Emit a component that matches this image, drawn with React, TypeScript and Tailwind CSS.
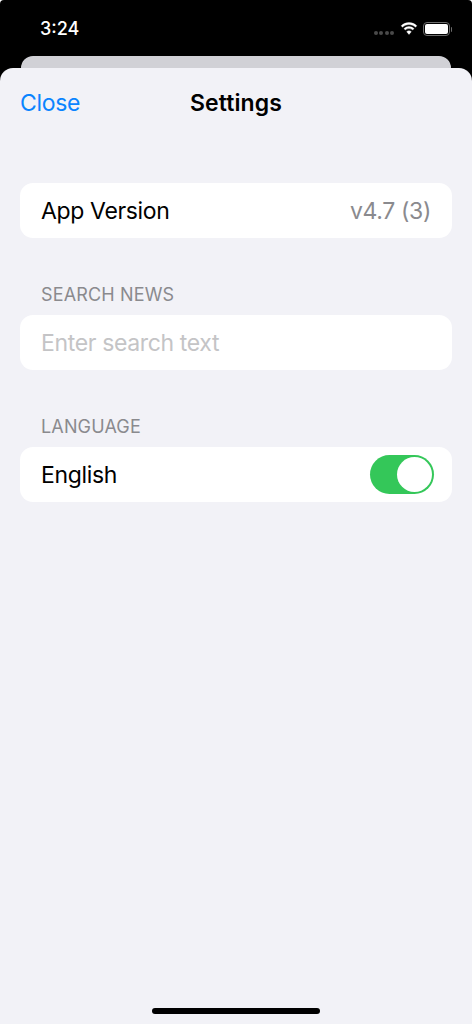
import { useState } from "react";

function StatusBar() {
  return (
    <div className="flex h-[56px] items-start justify-between pl-[40px] pr-[20px] pt-[20px]">
      <span className="text-[18px] font-medium leading-[18px] text-white">3:24</span>
      <div className="flex items-center gap-[5px] pt-[2px]">
        <div className="mb-[1px] mr-[1px] flex gap-[1.5px] self-end">
          {[0, 1, 2, 3].map((i) => (
            <span key={i} className="h-[4px] w-[4px] rounded-full bg-[#4a4a4a]" />
          ))}
        </div>
        <svg width="18" height="14" viewBox="0 0 18 14" fill="white" stroke="white" strokeWidth="0.4">
          <path d="M9 2.6c2.5 0 4.8 1 6.5 2.6l1.3-1.4C14.7 1.800 12 .6 9 .6S3.300 1.800 1.200 3.800l1.300 1.400C4.200 3.600 6.500 2.600 9 2.600z" />
          <path d="M9 6.600c1.400 0 2.700.5 3.700 1.400l1.300-1.400C12.700 5.400 10.900 4.600 9 4.600s-3.700.8-5 2l1.300 1.400c1-.9 2.300-1.400 3.700-1.400z" />
          <path d="M9 8.800c-.9 0-1.700.3-2.300.9L9 12.400l2.300-2.700c-.6-.6-1.400-.9-2.300-.9z" />
        </svg>
        <div className="flex items-center">
          <div className="flex h-[14px] w-[27px] items-center justify-center rounded-[4px] border border-[#6b6b6b]">
            <div className="h-[10px] w-[23px] rounded-[2px] bg-white" />
          </div>
          <div className="ml-[1px] h-[5px] w-[1px] rounded-r-sm bg-[#6b6b6b]" />
        </div>
      </div>
    </div>
  );
}

function Card({ children }: { children: React.ReactNode }) {
  return (
    <div className="mx-[20px] flex h-[55px] items-center justify-between rounded-[13px] bg-white px-[21px] text-[23px] tracking-[-0.35px] text-black">
      {children}
    </div>
  );
}

function SectionLabel({ text }: { text: string }) {
  return (
    <div className="mb-[9px] ml-[41px] text-[18px] leading-[22px] tracking-[0.15px] text-[#8a8a8e]">{text}</div>
  );
}

export default function App() {
  const [search, setSearch] = useState("");
  const [english, setEnglish] = useState(true);

  return (
    <div
      className="flex h-[1024px] w-[472px] flex-col overflow-hidden rounded-t-[4px] bg-black"
      style={{ fontFamily: "Inter, 'Liberation Sans', sans-serif" }}
    >
      <StatusBar />

      {/* card behind the sheet */}
      <div className="mx-[21px] h-[12px] shrink-0 rounded-t-[13px] bg-[#d1d1d6]" />

      <div className="relative flex flex-1 flex-col rounded-t-[13px] bg-[#f2f2f7]">
        <div className="flex h-[70px] items-center justify-between px-[20px]">
          <button className="text-[23px] leading-none tracking-[-0.3px] text-[#0a84ff]">Close</button>
          <h1 className="absolute left-0 right-0 text-center text-[23px] font-semibold leading-none tracking-[0.1px] text-black">
            Settings
          </h1>
        </div>

        <div className="mt-[45px]">
          <Card>
            <span className="pt-[2px]">App Version</span>
            <span className="pt-[2px] text-[#8a8a8e]">v4.7 (3)</span>
          </Card>
        </div>

        <div className="mt-[46px]">
          <SectionLabel text="SEARCH NEWS" />
          <Card>
            <input
              value={search}
              onChange={(e) => setSearch(e.target.value)}
              placeholder="Enter search text"
              className="w-full bg-transparent pt-[2px] outline-none placeholder:text-[#c4c4c6]"
            />
          </Card>
        </div>

        <div className="mt-[46px]">
          <SectionLabel text="LANGUAGE" />
          <Card>
            <span className="pt-[2px]">English</span>
            <button
              onClick={() => setEnglish(!english)}
              className={`-mr-[3px] flex h-[39px] w-[64px] items-center rounded-full p-[2px] ${english ? "justify-end bg-[#34c759]" : "justify-start bg-[#e5e5ea]"}`}
            >
              <span className="h-[35px] w-[35px] rounded-full bg-white" />
            </button>
          </Card>
        </div>

        <div className="mb-[10px] mt-auto h-[6px] w-[168px] self-center rounded-full bg-black" />
      </div>
    </div>
  );
}
